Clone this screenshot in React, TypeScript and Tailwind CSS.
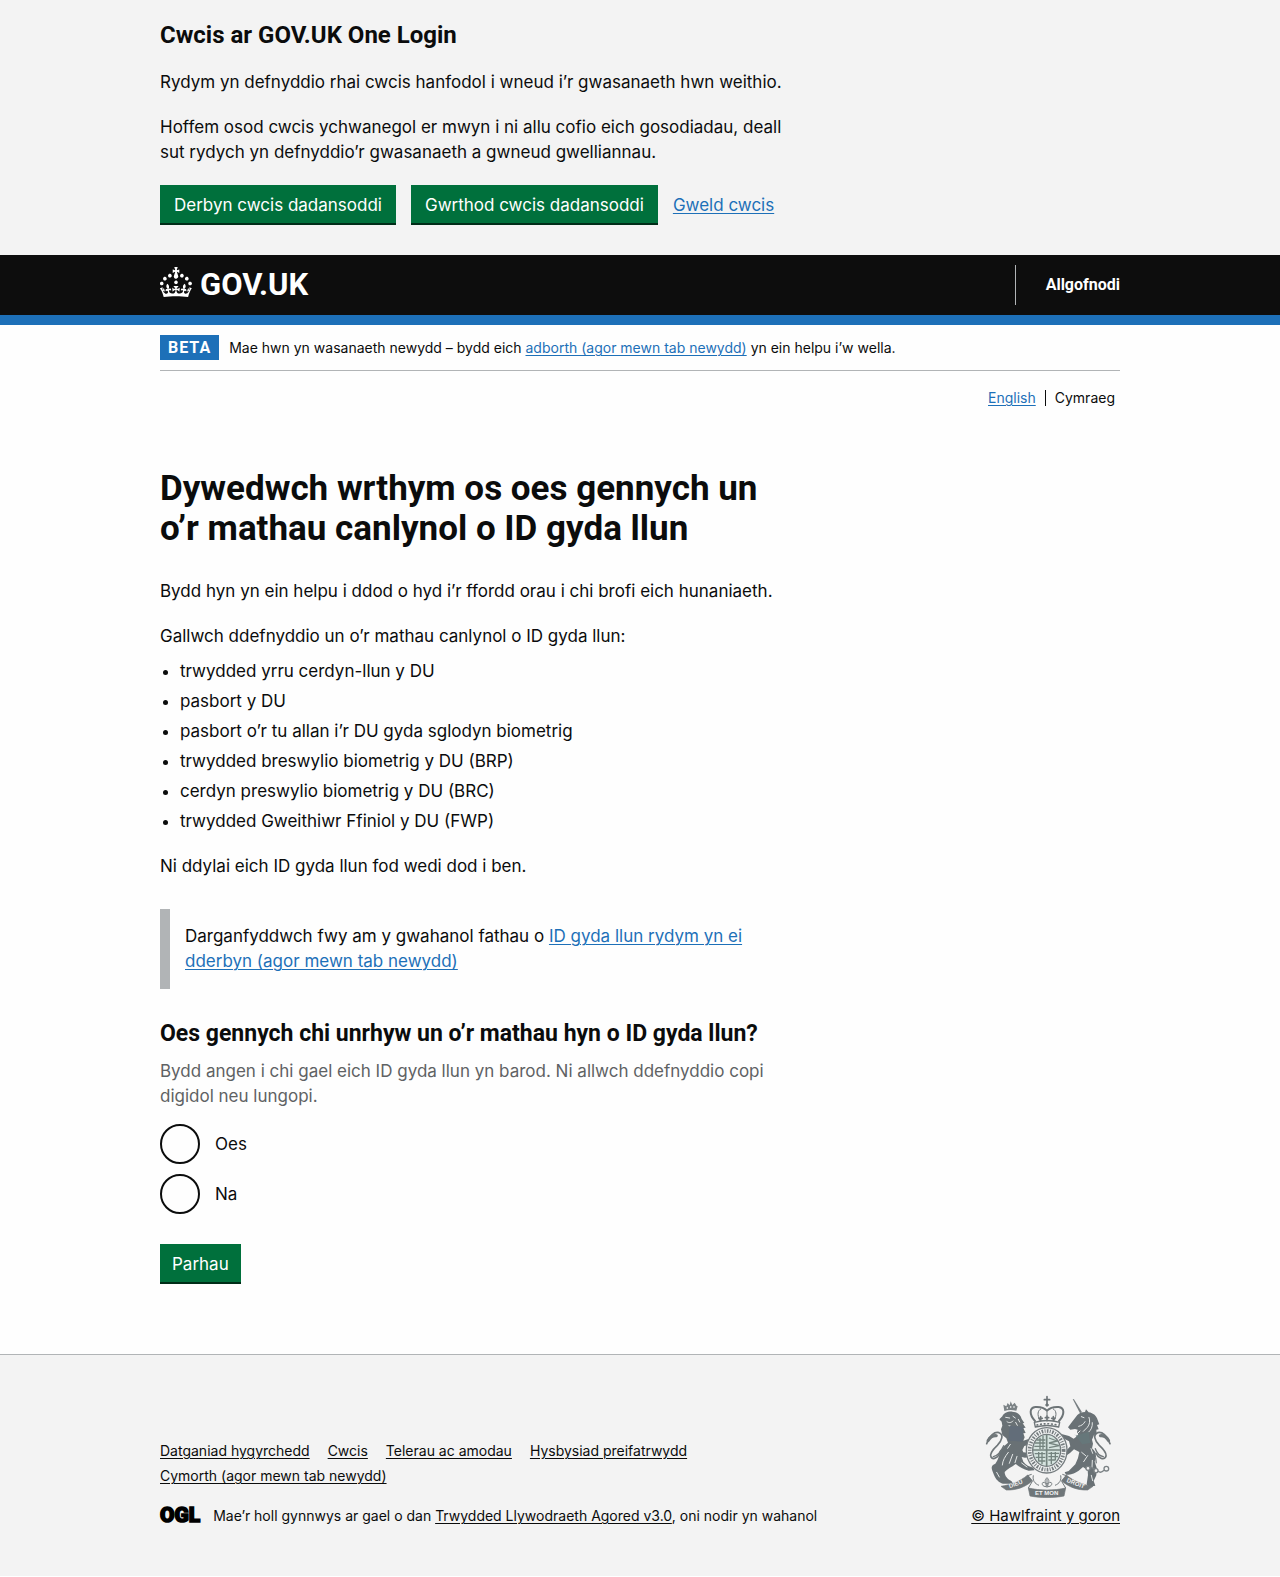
import type { ReactNode } from 'react';

const BODY = "font-['Inter','Liberation_Sans',sans-serif]";
const HEAD = "font-['Roboto','Liberation_Sans',sans-serif]";

const idTypes = [
  'trwydded yrru cerdyn-llun y DU',
  'pasbort y DU',
  'pasbort o’r tu allan i’r DU gyda sglodyn biometrig',
  'trwydded breswylio biometrig y DU (BRP)',
  'cerdyn preswylio biometrig y DU (BRC)',
  'trwydded Gweithiwr Ffiniol y DU (FWP)',
];

const footerLinks = [
  'Datganiad hygyrchedd',
  'Cwcis',
  'Telerau ac amodau',
  'Hysbysiad preifatrwydd',
  'Cymorth (agor mewn tab newydd)',
];

function Container({ children, className = '' }: { children: ReactNode; className?: string }) {
  return <div className={`mx-auto max-w-[960px] ${className}`}>{children}</div>;
}

function Link({ children }: { children: ReactNode }) {
  return (
    <a href="#" className="text-[#1d70b8] underline decoration-1 underline-offset-2">
      {children}
    </a>
  );
}

function FooterLink({ children }: { children: ReactNode }) {
  return (
    <a href="#" className="underline decoration-1 underline-offset-2">
      {children}
    </a>
  );
}

function Button({ children, className = 'px-[14px]' }: { children: ReactNode; className?: string }) {
  return (
    <button
      type="button"
      className={`h-10 border-b-2 border-[#002d18] bg-[#00703c] pt-[2px] text-[17px] leading-[19px] text-white ${className}`}
    >
      {children}
    </button>
  );
}

function Crown() {
  return (
    <svg aria-hidden="true" viewBox="0 0 32 30" className="h-[30px] w-8" fill="currentColor">
      <path d="M22.6 10.4c-1 .4-2-.1-2.4-1-.4-.9.1-2 1-2.4.9-.4 2 .1 2.4 1s-.1 2-1 2.4m-5.9 6.7c-.9.4-2-.1-2.4-1-.4-.9.1-2 1-2.4.9-.4 2 .1 2.4 1s-.1 2-1 2.4m10.8-3.7c-1 .4-2-.1-2.4-1-.4-.9.1-2 1-2.4.9-.4 2 .1 2.4 1s0 2-1 2.4m3.3 4.8c-1 .4-2-.1-2.4-1-.4-.9.1-2 1-2.4.9-.4 2 .1 2.4 1s-.1 2-1 2.4M17 4.7l2.3 1.2V2.5l-2.3.7-.2-.2.9-3h-3.4l.9 3-.2.2c-.1.1-2.3-.7-2.3-.7v3.4L15 4.7c.1.1.1.2.2.2l-1.3 4c-.1.2-.1.4-.1.6 0 1.1.8 2 1.9 2.2h.7c1-.2 1.9-1.1 1.9-2.1 0-.2 0-.4-.1-.6l-1.3-4c-.1-.2-.2-.2-.1-.3m-7.6 5.7c.9.4 2-.1 2.4-1 .4-.9-.1-2-1-2.4-.9-.4-2 .1-2.4 1s0 2 1 2.4m-5 3c.9.4 2-.1 2.4-1 .4-.9-.1-2-1-2.4-.9-.4-2 .1-2.4 1s.1 2 1 2.4m-3.2 4.8c.9.4 2-.1 2.4-1 .4-.9-.1-2-1-2.4-.9-.4-2 .1-2.4 1s0 2 1 2.4m14.8 11c4.4 0 8.6.3 12.3.8 1.1-4.5 2.4-7 3.7-8.8l-2.5-.9c.2 1.3.3 1.9 0 2.7-.4-.4-.8-1.1-1.1-2.3l-1.2 4c.7-.5 1.3-.8 2-.9-1.1 2.5-2.6 3.1-3.5 3-1.1-.2-1.7-1.2-1.5-2.1.3-1.2 1.5-1.5 2.1-.1 1.1-2.3-.8-3-2-2.3 1.9-1.9 2.1-3.5.6-5.6-2.1 1.6-2.1 3.2-1.2 5.5-1.2-1.4-3.2-.6-2.5 1.6.9-1.4 2.1-.5 1.9.8-.2 1.1-1.7 2.1-3.5 1.9-2.7-.2-2.9-2.1-2.9-3.6.7-.1 1.9.5 2.9 1.9l.4-4.3c-1.1 1.1-2.1 1.4-3.2 1.4.4-1.2 2.1-3 2.1-3h-5.4s1.7 1.9 2.1 3c-1.1 0-2.1-.2-3.2-1.4l.4 4.3c1-1.4 2.2-2 2.9-1.9-.1 1.5-.2 3.4-2.9 3.6-1.9.2-3.4-.8-3.5-1.9-.2-1.3 1-2.2 1.9-.8.7-2.3-1.2-3-2.5-1.6.9-2.2.9-3.9-1.2-5.5-1.5 2-1.3 3.7.6 5.6-1.2-.7-3.1 0-2 2.3.6-1.4 1.8-1.1 2.1.1.2.9-.3 1.9-1.5 2.1-.9.2-2.4-.5-3.5-3 .6 0 1.2.3 2 .9l-1.2-4c-.3 1.1-.7 1.9-1.1 2.3-.3-.8-.2-1.4 0-2.7l-2.9.9C1.3 23 2.6 25.5 3.7 30c3.7-.5 7.9-.8 12.3-.8" />
    </svg>
  );
}

/* Royal coat of arms: lion, crowned shield and garter, unicorn, and motto ribbon. */
function RoyalArms() {
  return (
    <svg aria-hidden="true" viewBox="12 12 378 309" className="h-[103px] w-[126px]" fill="none">
      {/* tails, behind the animals */}
      <g stroke="#6f7679" strokeWidth="5" strokeLinecap="round">
        <path d="M17 158c8-24 24-37 37-33 15 5 9 24-5 38-14 13-24 25-19 35 6 10 22 3 29-19" />
        <path d="M21 149c7-12 15-16 25-15" strokeWidth="9" />
        <path d="M37 197c13-3 23-16 31-33" strokeWidth="4" />
        <path d="M387 158c-8-24-24-37-37-33-15 5-9 24 5 38 14 13 24 25 19 35-6 10-22 3-29-11" />
        <path d="M383 149c-7-12-15-16-25-15" strokeWidth="9" />
        <path d="M367 197c-13-3-20-12-24-24" strokeWidth="4" />
      </g>
      {/* supporters */}
      <g fill="#697175">
        <path d="M64 76c4-10 16-15 30-14 15 1 25 9 28 22l8 12-5 1 9 13-7 1 7 15-7 1 4 12-4 10 18-6 14-1 5 7-10 9-24 7-6 12 3 7 15 1 10-5 6 8-9 9-17 3-10-2 5 14c8 10 18 15 30 18l3 8-17 1c-16-4-28-12-39-20-12 10-26 15-33 24 0 12 9 22 20 27l6 8H66c-12-3-22-13-27-26l-5-13c-5-12 0-18 9-21 10-12 10-24 16-37 5-12 14-20 22-26l-5-13-12-10-4-17 4-11-2-12-7-7z" />
        <path d="M289 72c6-6 14-9 23-9l3-8 8 9c14 2 24 11 27 23l5 13-7 2 5 13-7 1 1 14-8 2-6 14 3 12-3 14c8 6 12 14 12 25l-4 15 6 18-1 23-8 17 5 14-20 4-6-8 4-28-1-14-14-10-13 11c-10 7-20 11-30 12h-8l-4-7 12-4 20-20 8-19 4-18-16-8-12 11-10 7-7-8 18-19-4-15-13-7-14-2-3-7 10-5 20 5 14 8 14-10-4-10 2-7-8-2-14 2-7-7 9-12z" />
      </g>
      {/* lion's crown */}
      <path d="M70 60l-3-19 9 5 4-10 6 7 3-12 5 11 7-7 6 10 3 1-4 13c-12-3-25-3-36 1z" fill="#7b8285" />
      <path d="M77 51h4M87 48h4M97 48h4" stroke="#f3f3f3" strokeWidth="5" />
      {/* face, mane and limb highlights */}
      <g stroke="#e4e7e7" strokeWidth="3" strokeLinecap="round">
        <path d="M74 79l12 2M78 92c6 5 13 3 18-2M96 76l7 5M104 94l5 9M84 104l12 4M112 85l4 8" />
        <path d="M82 184c-10 13-17 24-18 38M95 190l-10 27M108 196l-6 19M122 216l16 12M47 244l8 14M88 160l-8 12" />
        <path d="M301 77l8 3M312 92c-5 9-11 12-19 14M324 79c4 11 2 22-5 30l-12 12M334 95c1 13-4 22-11 28M297 120l-9 9" />
        <path d="M302 184l12 10M320 194l-12 18M334 208l-1 22M330 173l5 14M281 131l12 8M331 253l4 16" />
      </g>
      <path d="M86 104l41 4-2 44-43-3z" fill="#626d79" />
      <path d="M284 134l39-12 5 34-24 4z" fill="#66777a" />
      {/* horn and chain */}
      <path d="M275 24l4 1 24 39-6 3z" fill="#777e81" />
      <g stroke="#7b8285" strokeWidth="4">
        <circle cx="321" cy="232" r="6" fill="#f3f3f3" />
        <circle cx="345" cy="239" r="6" fill="#f3f3f3" />
        <circle cx="376" cy="233" r="7" fill="#f3f3f3" />
        <path d="M326 227l15 7M351 240c6 6 12 4 18-2M344 200l2 17" />
      </g>
      {/* central crown */}
      <g stroke="#6d7477" strokeLinejoin="round" strokeLinecap="round">
        <path d="M198 17v26M190 26h16" strokeWidth="5" />
        <circle cx="198" cy="42" r="4" fill="#6d7477" strokeWidth="2" />
        <path d="M162 90c-18-20-17-40 1-42 14-1 27 3 35 11 8-8 21-12 35-11 18 2 19 22 1 42" strokeWidth="6" />
        <path d="M176 88c-8-18-6-29 3-34M220 88c8-18 6-29-3-34M198 58v16" strokeWidth="3" />
        <path d="M193 80h10M198 75v14M174 82h10M179 77v12M212 82h10M217 77v12" strokeWidth="5" />
        <path d="M160 94c24-7 52-7 76 0l-3 14c-23-6-47-6-70 0z" strokeWidth="4" />
        <path d="M168 102c20-5 40-5 60 0" strokeWidth="5" strokeDasharray="2 9" />
      </g>
      {/* garter and shield */}
      <ellipse cx="197" cy="178" rx="61" ry="68" fill="#f0f2f2" stroke="#757c7f" strokeWidth="4" />
      <ellipse cx="197" cy="178" rx="51" ry="58" stroke="#757c7f" strokeWidth="11" strokeDasharray="5 4 3 4" />
      <ellipse cx="197" cy="178" rx="42" ry="48" fill="#d5e3df" stroke="#757c7f" strokeWidth="4" />
      <g stroke="#74847f" strokeWidth="4">
        <path d="M197 130v95M156 177h83" strokeWidth="5" />
        <path d="M167 147h26M162 156h31M160 166h33M177 140v34M186 134v40" />
        <path d="M204 141l24 9-24 6 31 8-31 6M202 187h32M202 197h29M202 207h21M211 183v36M223 183v25" />
        <path d="M161 188h32M164 199h29M172 210h21M173 183v28M183 183v36" />
      </g>
      {/* thistle and rose sprig */}
      <path
        d="M198 263v27M198 260c-8 8-7 14 0 19 7-5 8-11 0-19M196 287c-12 0-15-9-10-13 8 0 10 6 10 13M200 287c12 0 15-9 10-13-8 0-10 6-10 13"
        stroke="#767d80"
        strokeWidth="3"
      />
      {/* motto ribbon */}
      <g fill="#6f7679" stroke="#6f7679" strokeLinejoin="round">
        <path d="M60 286c27-4 57-14 80-34l14 17c-20 19-48 29-78 28z" strokeWidth="2" />
        <path d="M336 286c-27-4-57-14-80-34l-14 17c20 19 48 29 78 28z" strokeWidth="2" />
        <path d="M142 291c34 8 78 8 112 0l-5 24c-30 6-72 6-102 0z" strokeWidth="2" />
        <path
          d="M152 250l-12 4 14 17-12 20M244 250l12 4-14 17 12 20M157 253c-3 15 4 25 17 30M239 253c3 15-4 25-17 30"
          fill="none"
          strokeWidth="3"
        />
      </g>
      <g fill="#f3f3f3" className="font-['Liberation_Sans',sans-serif] text-[18px] font-bold">
        <text x="86" y="292" transform="rotate(-21 86 292)">DIEU</text>
        <text x="162" y="312">ET MON</text>
        <text x="256" y="272" transform="rotate(22 256 272)">DROIT</text>
      </g>
    </svg>
  );
}

export default function App() {
  return (
    <div className={`${BODY} bg-[#fefefe] text-[17px] leading-[25px] text-[#0b0c0c]`}>
      <section aria-label="Cwcis ar GOV.UK One Login" className="bg-[#f3f3f3] pt-5 pb-[30px]">
        <Container>
          <div className="max-w-[630px]">
            <h2 className={`${HEAD} mb-5 text-2xl leading-[30px] font-bold`}>Cwcis ar GOV.UK One Login</h2>
            <p className="mb-5">Rydym yn defnyddio rhai cwcis hanfodol i wneud i’r gwasanaeth hwn weithio.</p>
            <p className="mb-5">
              Hoffem osod cwcis ychwanegol er mwyn i ni allu cofio eich gosodiadau, deall sut rydych yn defnyddio’r
              gwasanaeth a gwneud gwelliannau.
            </p>
          </div>
          <div className="flex flex-wrap items-center gap-[15px]">
            <Button>Derbyn cwcis dadansoddi</Button>
            <Button>Gwrthod cwcis dadansoddi</Button>
            <Link>Gweld cwcis</Link>
          </div>
        </Container>
      </section>

      <header className="border-b-10 border-[#1d70b8] bg-[#0d0d0d] text-white">
        <Container className="flex h-[60px] items-center justify-between">
          <a href="#" className="flex items-start gap-2">
            <Crown />
            <span className={`${HEAD} text-[31px] leading-9 font-bold`}>GOV.UK</span>
          </a>
          <nav className="flex h-10 items-center border-l border-[#b1b4b6] pl-[30px]">
            <a href="#" className={`${HEAD} text-base font-bold`}>
              Allgofnodi
            </a>
          </nav>
        </Container>
      </header>

      <Container>
        <div className="flex items-center gap-[10px] border-b border-[#b1b4b6] py-[10px] text-sm leading-[25px]">
          <strong className={`${HEAD} bg-[#1d70b8] px-2 text-base leading-[25px] font-bold tracking-[1px] text-white`}>
            BETA
          </strong>
          <span>
            Mae hwn yn wasanaeth newydd – bydd eich <Link>adborth (agor mewn tab newydd)</Link> yn ein helpu i’w wella.
          </span>
        </div>
        <nav aria-label="Iaith" className="mt-[14px] flex items-center justify-end pr-[5px] text-sm leading-[25px]">
          <Link>English</Link>
          <span className="ml-[9px] h-4 border-l border-[#0b0c0c] pl-[9px]" aria-hidden="true" />
          <span>Cymraeg</span>
        </nav>

        <main className="pt-[59px] pb-[70px]">
          <div className="max-w-[630px]">
            <h1 className={`${HEAD} mb-[30px] text-[35px] leading-10 font-bold`}>
              Dywedwch wrthym os oes gennych un o’r mathau canlynol o ID gyda llun
            </h1>
            <p className="mb-5">Bydd hyn yn ein helpu i ddod o hyd i’r ffordd orau i chi brofi eich hunaniaeth.</p>
            <p className="mb-[10px]">Gallwch ddefnyddio un o’r mathau canlynol o ID gyda llun:</p>
            <ul className="mb-5 list-disc space-y-[5px] pl-5">
              {idTypes.map((t) => (
                <li key={t}>{t}</li>
              ))}
            </ul>
            <p>Ni ddylai eich ID gyda llun fod wedi dod i ben.</p>
            <div className="my-[30px] border-l-10 border-[#b1b4b6] p-[15px]">
              Darganfyddwch fwy am y gwahanol fathau o <Link>ID gyda llun rydym yn ei dderbyn (agor mewn tab newydd)</Link>
            </div>
            <fieldset className="mb-[30px]">
              <legend className={`${HEAD} mb-[10px] text-[23px] leading-[30px] font-bold`}>
                Oes gennych chi unrhyw un o’r mathau hyn o ID gyda llun?
              </legend>
              <p className="mb-[15px] text-[#5f6264]">
                Bydd angen i chi gael eich ID gyda llun yn barod. Ni allwch ddefnyddio copi digidol neu lungopi.
              </p>
              <div className="space-y-[10px]">
                {['Oes', 'Na'].map((v) => (
                  <label key={v} className="flex h-10 items-center gap-[15px]">
                    <input
                      type="radio"
                      name="photo-id"
                      value={v}
                      className="size-10 appearance-none rounded-full border-2 border-[#0b0c0c] checked:border-[12px]"
                    />
                    {v}
                  </label>
                ))}
              </div>
            </fieldset>
            <Button className="px-3">Parhau</Button>
          </div>
        </main>
      </Container>

      <footer className="border-t border-[#b1b4b6] bg-[#f3f3f3] pt-10 pb-12 text-sm leading-[25px]">
        <Container className="flex items-end justify-between gap-[30px]">
          <div>
            <ul className="mb-[15px] flex max-w-[580px] flex-wrap gap-x-[18px]">
              {footerLinks.map((l) => (
                <li key={l}>
                  <FooterLink>{l}</FooterLink>
                </li>
              ))}
            </ul>
            <div className="flex items-center gap-[13px]">
              <span
                aria-hidden="true"
                className={`${HEAD} text-[21px] leading-[25px] font-black text-black [-webkit-text-stroke:1.5px_black]`}
              >
                OGL
              </span>
              <span>
                Mae’r holl gynnwys ar gael o dan <FooterLink>Trwydded Llywodraeth Agored v3.0</FooterLink>, oni nodir yn
                wahanol
              </span>
            </div>
          </div>
          <a href="#" className="flex flex-col items-end gap-[5px] text-[15px] underline decoration-1 underline-offset-2">
            <span className="mr-[9px]">
              <RoyalArms />
            </span>
            © Hawlfraint y goron
          </a>
        </Container>
      </footer>
    </div>
  );
}
